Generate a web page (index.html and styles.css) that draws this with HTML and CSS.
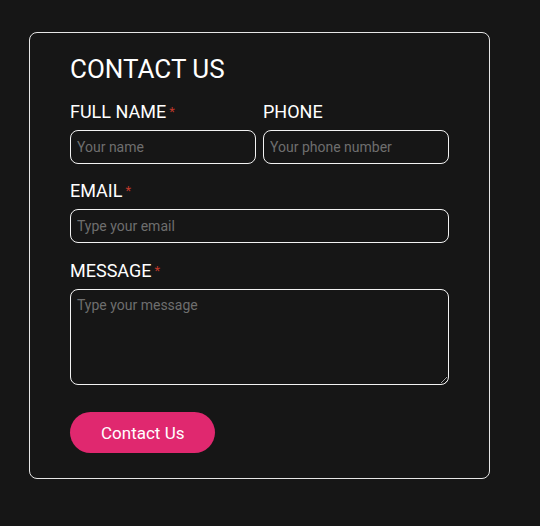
FILE: index.html
```html
<!DOCTYPE html>
<html lang="en">
<head>
  <meta charset="UTF-8">
  <title>Contact Us</title>
  <link rel="stylesheet" href="styles.css">
</head>
<body>

<div class="card">
  <h2>CONTACT US</h2>

  <div class="row">
    <div class="field">
      <label for="name">FULL NAME<span class="req">*</span></label>
      <input type="text" id="name" placeholder="Your name">
    </div>
    <div class="field">
      <label for="phone">PHONE</label>
      <input type="text" id="phone" placeholder="Your phone number">
    </div>
  </div>

  <div class="field email-field">
    <label for="email">EMAIL<span class="req">*</span></label>
    <input type="email" id="email" placeholder="Type your email">
  </div>

  <div class="field">
    <label for="message">MESSAGE<span class="req">*</span></label>
    <textarea id="message" placeholder="Type your message"></textarea>
  </div>

  <button class="send-btn">Contact Us</button>
</div>

</body>
</html>
```

FILE: styles.css
```css
* {
  box-sizing: border-box;
}

body {
  font-family: Roboto, "Liberation Sans", sans-serif;
  background: #161616;
  margin: 0;
  padding: 32px 29px;
  color: #fff;
}

.card {
  width: 461px;
  border: 1px solid #e6e6e6;
  border-radius: 8px;
  padding: 21px 40px 25px 40px;
}

h2 {
  font-size: 26px;
  font-weight: 400;
  margin: 0 0 17px;
}

.row {
  display: grid;
  grid-template-columns: 1fr 1fr;
  gap: 7px;
}

.field {
  display: flex;
  flex-direction: column;
  gap: 8px;
  margin-bottom: 16px;
}

.email-field {
  margin-bottom: 17px;
}

label {
  font-size: 18px;
}

.req {
  color: #c0392b;
  font-size: 13px;
  margin-left: 3px;
  vertical-align: 2px;
}

input, textarea {
  width: 100%;
  background: transparent;
  border: 1px solid #f2f2f2;
  border-radius: 8px;
  color: #fff;
  font-family: inherit;
  font-size: 14px;
  padding: 7px 6px;
  height: 34px;
}

textarea {
  height: 96px;
  resize: vertical;
}

input::placeholder, textarea::placeholder {
  color: #6e6e6e;
}

.send-btn {
  margin-top: 11px;
  background: #e0286f;
  color: #fff;
  border: none;
  border-radius: 21px;
  font-family: inherit;
  font-size: 17px;
  height: 41px;
  padding: 0 31px;
  cursor: pointer;
}
```
